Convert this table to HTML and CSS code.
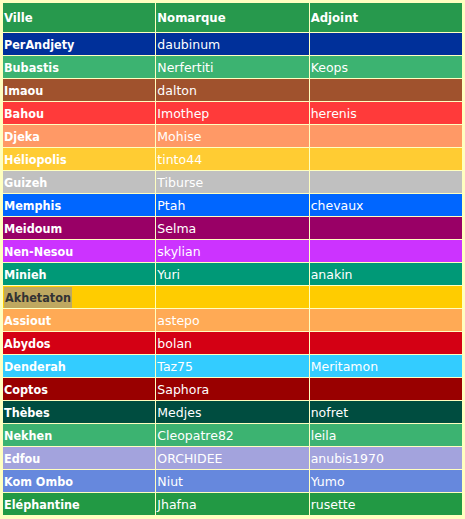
FILE: index.html
```html
<!DOCTYPE html>
<html>
<head>
<meta charset="utf-8">
<link rel="stylesheet" href="styles.css">
</head>
<body>
<table class="nomes">
<thead>
<tr class="head"><th>Ville</th><th>Nomarque</th><th>Adjoint</th></tr>
</thead>
<tbody>
<tr class="c-perandjety"><td class="ville">PerAndjety</td><td>daubinum</td><td></td></tr>
<tr class="c-bubastis"><td class="ville">Bubastis</td><td>Nerfertiti</td><td>Keops</td></tr>
<tr class="c-imaou"><td class="ville">Imaou</td><td>dalton</td><td></td></tr>
<tr class="c-bahou"><td class="ville">Bahou</td><td>Imothep</td><td>herenis</td></tr>
<tr class="c-djeka"><td class="ville">Djeka</td><td>Mohise</td><td></td></tr>
<tr class="c-heliopolis"><td class="ville">Héliopolis</td><td>tinto44</td><td></td></tr>
<tr class="c-guizeh"><td class="ville">Guizeh</td><td>Tiburse</td><td></td></tr>
<tr class="c-memphis"><td class="ville">Memphis</td><td>Ptah</td><td>chevaux</td></tr>
<tr class="c-meidoum"><td class="ville">Meidoum</td><td>Selma</td><td></td></tr>
<tr class="c-nennesou"><td class="ville">Nen-Nesou</td><td>skylian</td><td></td></tr>
<tr class="c-minieh"><td class="ville">Minieh</td><td>Yuri</td><td>anakin</td></tr>
<tr class="c-akhetaton"><td class="ville"><span class="mark">Akhetaton</span></td><td></td><td></td></tr>
<tr class="c-assiout"><td class="ville">Assiout</td><td>astepo</td><td></td></tr>
<tr class="c-abydos"><td class="ville">Abydos</td><td>bolan</td><td></td></tr>
<tr class="c-denderah"><td class="ville">Denderah</td><td>Taz75</td><td>Meritamon</td></tr>
<tr class="c-coptos"><td class="ville">Coptos</td><td>Saphora</td><td></td></tr>
<tr class="c-thebes"><td class="ville">Thèbes</td><td>Medjes</td><td>nofret</td></tr>
<tr class="c-nekhen"><td class="ville">Nekhen</td><td>Cleopatre82</td><td>leila</td></tr>
<tr class="c-edfou"><td class="ville">Edfou</td><td>ORCHIDEE</td><td>anubis1970</td></tr>
<tr class="c-komombo"><td class="ville">Kom Ombo</td><td>Niut</td><td>Yumo</td></tr>
<tr class="c-elephantine"><td class="ville">Eléphantine</td><td>Jhafna</td><td>rusette</td></tr>
</tbody>
</table>
</body>
</html>
```
FILE: styles.css
```css
html, body {
  margin: 0;
  padding: 0;
  background: #ffffc0;
}
body {
  padding: 2px 2px 0 2px;
  font-family: "DejaVu Sans", Verdana, sans-serif;
  font-size: 12.5px;
  color: #fff;
}
.nomes {
  width: 461px;
  border-collapse: separate;
  border-spacing: 1px;
  table-layout: fixed;
}
.nomes th, .nomes td {
  width: 33.33%;
  padding: 0 1px;
  text-align: left;
  white-space: nowrap;
}
.nomes th {
  height: 29px;
  font-family: "DejaVu Sans Condensed", "DejaVu Sans", sans-serif;
  font-size: 13px;
  font-weight: bold;
  background: #27994d;
}
.nomes td {
  height: 22px;
}
.nomes td.ville {
  font-family: "DejaVu Sans Condensed", "DejaVu Sans", sans-serif;
  font-weight: bold;
}
.c-perandjety td { background: #00309a; }
.c-bubastis td { background: #3cb371; }
.c-imaou td { background: #a0522d; }
.c-bahou td { background: #ff3a3a; }
.c-djeka td { background: #ff9966; }
.c-heliopolis td { background: #ffcc33; }
.c-guizeh td { background: #c0c0c0; }
.c-memphis td { background: #0066ff; }
.c-meidoum td { background: #990066; }
.c-nennesou td { background: #cc33ff; }
.c-minieh td { background: #009977; }
.c-akhetaton td { background: #ffcc00; }
.c-assiout td { background: #ffaa55; }
.c-abydos td { background: #d40014; }
.c-denderah td { background: #33ccff; }
.c-coptos td { background: #990000; }
.c-thebes td { background: #004d40; }
.c-nekhen td { background: #3cb371; }
.c-edfou td { background: #a3a3dd; }
.c-komombo td { background: #6688dd; }
.c-elephantine td { background: #229944; }
.mark {
  display: inline-block;
  background: #bfa860;
  color: #333;
  padding: 3px 1px;
}
```
